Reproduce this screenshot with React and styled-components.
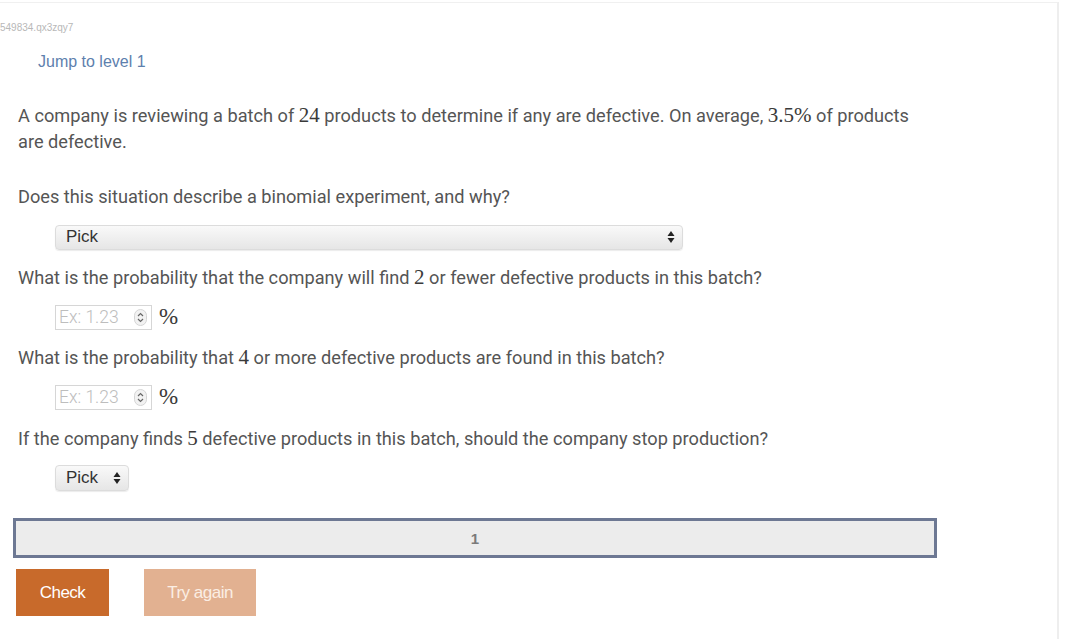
import React from 'react';
import styled, { createGlobalStyle } from 'styled-components';

const GlobalStyle = createGlobalStyle`
  html, body {
    margin: 0;
    padding: 0;
    background: #ffffff;
  }
  body {
    font-family: Roboto, "Liberation Sans", Arial, sans-serif;
    color: #4a4a4a;
  }
`;

const Page = styled.div`
  width: 1059px;
  min-height: 637px;
  box-sizing: border-box;
  border-right: 2px solid #eeeeee;
  border-top: 1px solid #f0f0f0;
  margin-top: 2px;
`;

const Content = styled.div`
  padding: 19px 0 0 0;
`;

const ActivityId = styled.div`
  font-family: "Liberation Sans", Arial, sans-serif;
  font-size: 10px;
  color: #b8b8b8;
  line-height: 12px;
`;

const JumpLink = styled.a`
  display: inline-block;
  margin: 18px 0 0 38px;
  font-family: "Liberation Sans", Arial, sans-serif;
  font-size: 16px;
  line-height: 20px;
  color: #5d80ad;
  text-decoration: none;
`;

const Body = styled.div`
  padding: 0 0 0 18px;
  width: 900px;
`;

const Text = styled.p`
  margin: ${p => p.$top || 0}px 0 0 0;
  font-size: 18.2px;
  line-height: 26px;
  font-weight: 400;
  color: #555555;
`;

const M = styled.span`
  font-family: "Liberation Serif", "Times New Roman", serif;
  font-size: 21px;
  line-height: 1;
  color: #3a3a3a;
`;

const AnswerRow = styled.div`
  display: flex;
  align-items: center;
  gap: 7px;
  margin: ${p => p.$top || 0}px 0 0 55px;
  height: ${p => p.$h || 26}px;
`;

const SelectBox = styled.div`
  display: flex;
  align-items: center;
  justify-content: space-between;
  box-sizing: border-box;
  width: ${p => p.$w}px;
  height: ${p => p.$h || 25}px;
  padding: 0 7px 0 10px;
  border-radius: 4px;
  border: 1px solid #dcdcdc;
  background: linear-gradient(#f9f9f9, #e6e6e6);
  box-shadow: 0 1px 1px rgba(0, 0, 0, 0.08);
  font-family: "Liberation Sans", Arial, sans-serif;
  font-size: 17px;
  color: #333;
`;

const NumberBox = styled.div`
  display: flex;
  align-items: center;
  justify-content: space-between;
  box-sizing: border-box;
  width: 97px;
  height: 25px;
  padding: 0 4px 0 3px;
  border: 1px solid #d6d6d6;
  background: #fff;
  font-size: 17.5px;
  font-weight: 300;
  color: #bdbdbd;
`;

const Pct = styled.span`
  font-family: "Liberation Serif", "Times New Roman", serif;
  font-size: 23px;
  color: #3a3a3a;
`;

const Arrows = () => (
  <svg width="8" height="14" viewBox="0 0 8 14">
    <path d="M4 1 L7.5 6 L0.5 6 Z" fill="#222" />
    <path d="M4 13 L7.5 8 L0.5 8 Z" fill="#222" />
  </svg>
);

const Spinner = () => (
  <svg width="13" height="17" viewBox="0 0 13 17">
    <rect x="0.5" y="0.5" width="12" height="16" rx="6" fill="#f2f2f2" stroke="#d4d4d4" />
    <path d="M4 7 L6.5 4.5 L9 7" stroke="#666" strokeWidth="1.2" fill="none" />
    <path d="M4 10 L6.5 12.5 L9 10" stroke="#666" strokeWidth="1.2" fill="none" />
  </svg>
);

const Progress = styled.div`
  box-sizing: border-box;
  width: 924px;
  height: 40px;
  margin: 27px 0 0 13px;
  border: 3px solid #6d7893;
  background: #ececec;
  display: flex;
  align-items: center;
  justify-content: center;
  font-family: "Liberation Sans", Arial, sans-serif;
  font-weight: 700;
  font-size: 15px;
  color: #7a7a7a;
`;

const Buttons = styled.div`
  display: flex;
  gap: 35px;
  margin: 11px 0 0 16px;
`;

const Button = styled.button`
  border: none;
  width: ${p => p.$w}px;
  height: 47px;
  background: ${p => (p.$muted ? '#e2b191' : '#c86a2b')};
  color: ${p => (p.$muted ? '#fbeee4' : '#ffffff')};
  font-family: "Liberation Sans", Arial, sans-serif;
  font-size: 17px;
  letter-spacing: -0.5px;
  cursor: pointer;
`;

export default function App() {
  return (
    <>
      <GlobalStyle />
      <Page>
        <Content>
          <ActivityId>549834.qx3zqy7</ActivityId>
          <JumpLink href="#">Jump to level 1</JumpLink>
          <Body>
            <Text $top={31}>
              A company is reviewing a batch of <M>24</M> products to determine if any are defective. On average, <M>3.5%</M> of products are defective.
            </Text>
            <Text $top={29}>Does this situation describe a binomial experiment, and why?</Text>
          </Body>
          <AnswerRow $top={14}>
            <SelectBox $w={628}>
              <span>Pick</span>
              <Arrows />
            </SelectBox>
          </AnswerRow>
          <Body>
            <Text $top={15}>
              What is the probability that the company will find <M>2</M> or fewer defective products in this batch?
            </Text>
          </Body>
          <AnswerRow $top={13}>
            <NumberBox>
              <span>Ex: 1.23</span>
              <Spinner />
            </NumberBox>
            <Pct>%</Pct>
          </AnswerRow>
          <Body>
            <Text $top={15}>
              What is the probability that <M>4</M> or more defective products are found in this batch?
            </Text>
          </Body>
          <AnswerRow $top={13}>
            <NumberBox>
              <span>Ex: 1.23</span>
              <Spinner />
            </NumberBox>
            <Pct>%</Pct>
          </AnswerRow>
          <Body>
            <Text $top={16}>
              If the company finds <M>5</M> defective products in this batch, should the company stop production?
            </Text>
          </Body>
          <AnswerRow $top={13}>
            <SelectBox $w={74} $h={26}>
              <span>Pick</span>
              <Arrows />
            </SelectBox>
          </AnswerRow>
          <Progress>1</Progress>
          <Buttons>
            <Button $w={93}>Check</Button>
            <Button $w={112} $muted>Try again</Button>
          </Buttons>
        </Content>
      </Page>
    </>
  );
}
